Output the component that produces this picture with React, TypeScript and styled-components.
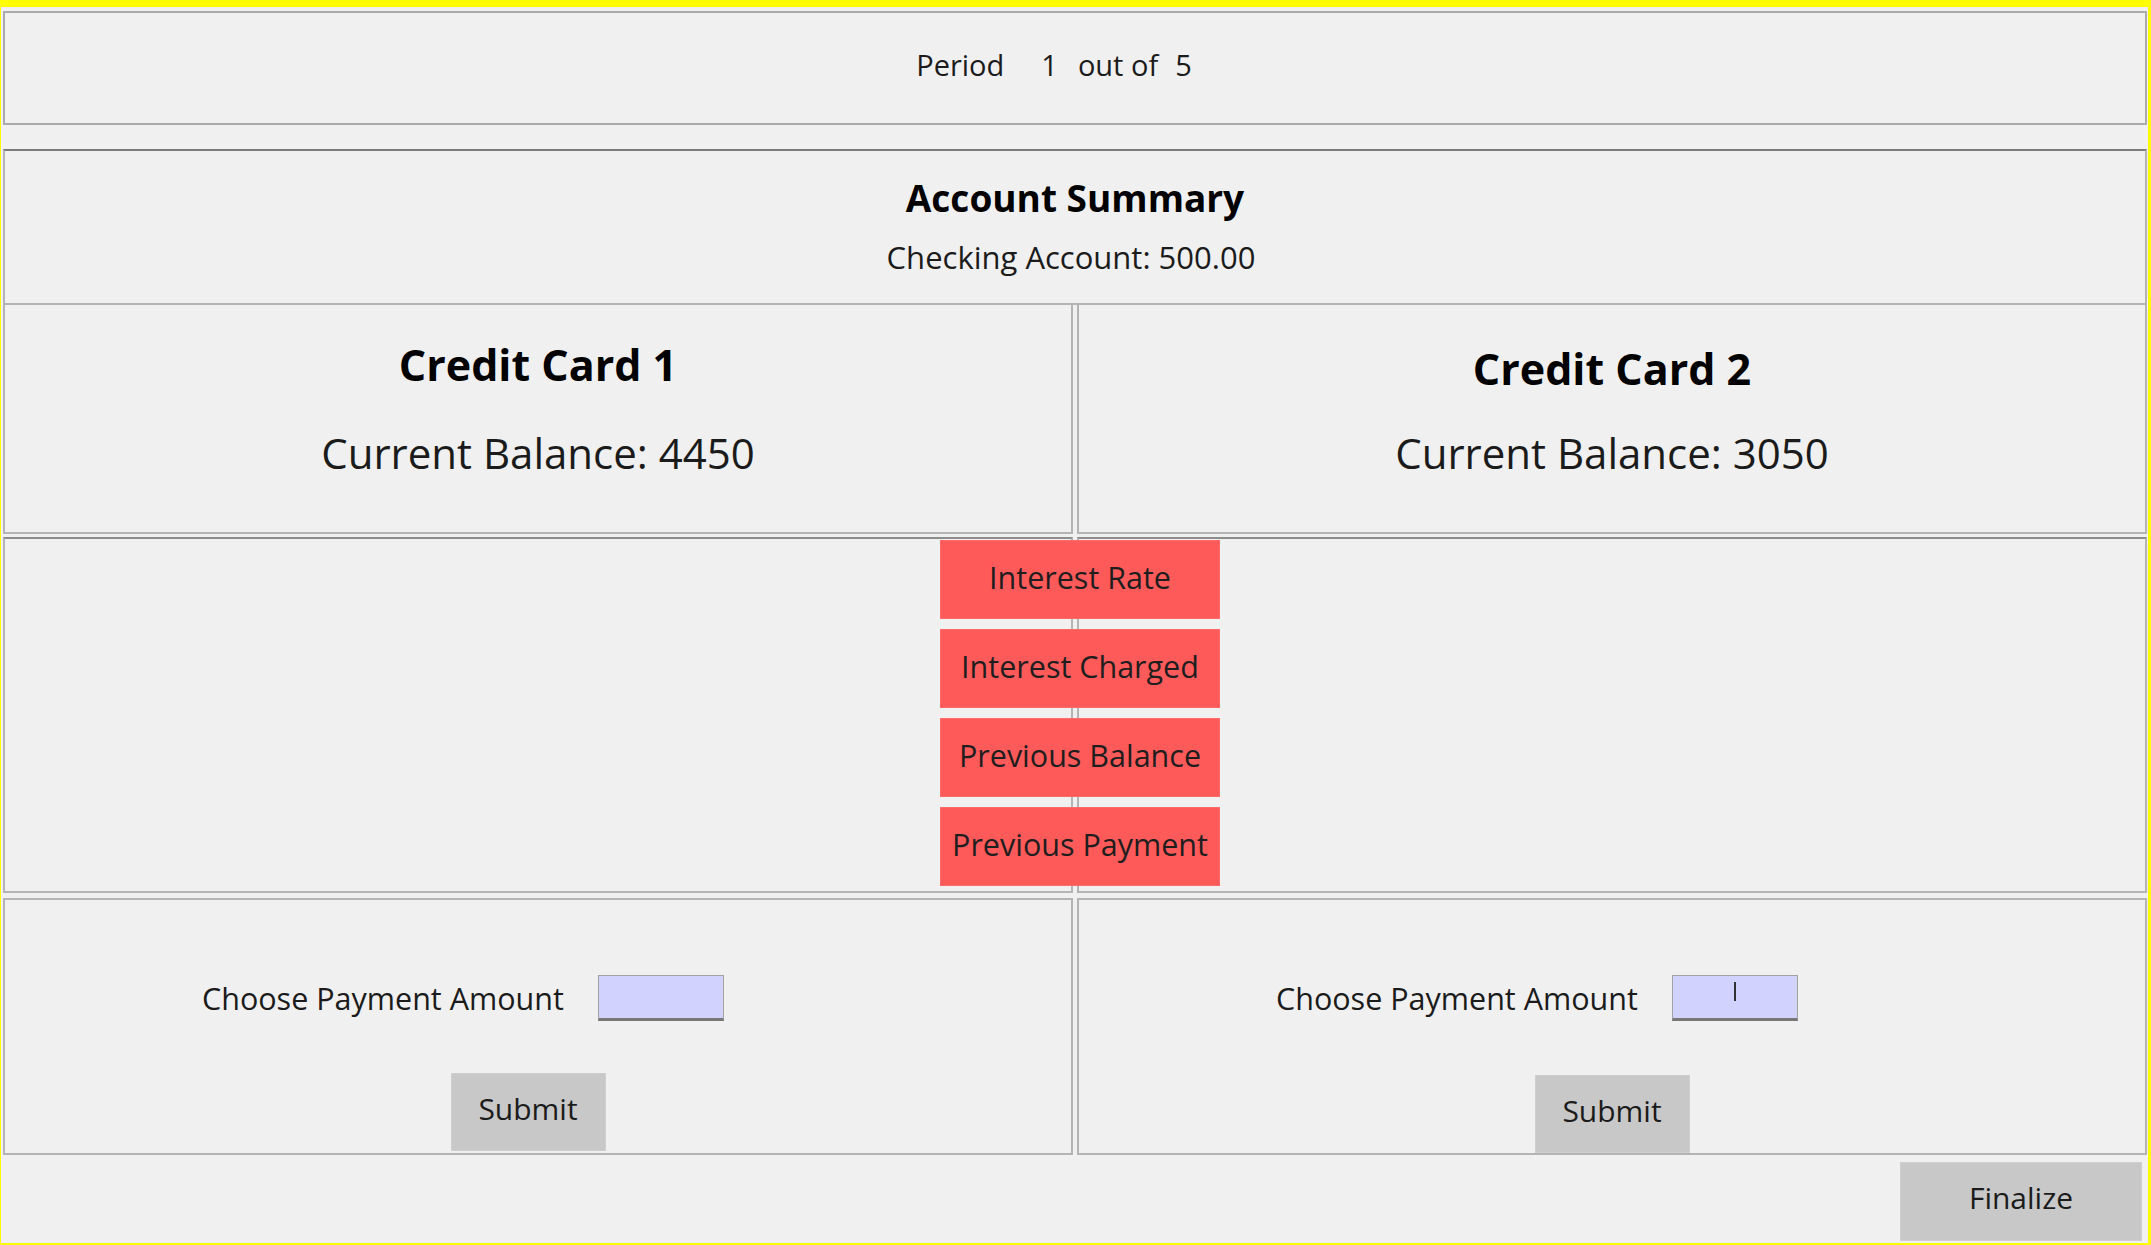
import styled, { createGlobalStyle } from "styled-components";

const GlobalStyle = createGlobalStyle`
  html, body {
    margin: 0;
    padding: 0;
    background: #ffff00;
  }
  body {
    font-family: "Open Sans", "Noto Sans", "Liberation Sans", sans-serif;
    color: #1b1b1b;
  }
  * { box-sizing: border-box; }
`;

const Window = styled.div`
  margin: 7px 3px 0 1px;
  height: 1236px;
  background: #f0f0f0;
  padding: 4px 1px 0 2px;
  display: flex;
  flex-direction: column;
`;

const PeriodBar = styled.div`
  height: 114px;
  border: 2px solid #ababab;
  display: flex;
  align-items: center;
  justify-content: center;
  padding: 0 42px 8px 0;
  font-size: 29px;
`;

const PeriodPart = styled.span<{ $gap?: number }>`
  margin-left: ${(p) => p.$gap ?? 0}px;
  white-space: pre;
`;

const Board = styled.div`
  margin-top: 24px;
  display: flex;
  flex-direction: column;
`;

const Summary = styled.div`
  height: 156px;
  border: 2px solid #b4b4b4;
  border-top-color: #7c7c7c;
  display: flex;
  flex-direction: column;
  align-items: center;
  padding-top: 25px;
`;

const SummaryTitle = styled.div`
  font-size: 37px;
  font-weight: 700;
  line-height: 44px;
  color: #000;
`;

const SummaryLine = styled.div`
  margin: 17px 8px 0 0;
  font-size: 31px;
  line-height: 40px;
`;

const Columns = styled.div`
  position: relative;
  display: grid;
  grid-template-columns: 1fr 1fr;
  column-gap: 4px;
`;

const Column = styled.div`
  display: flex;
  flex-direction: column;
`;

const CardBox = styled.div<{ $drop?: number }>`
  height: 229px;
  border: 2px solid #b4b4b4;
  border-top: none;
  display: flex;
  flex-direction: column;
  align-items: center;
  padding-top: ${(p) => 32 + (p.$drop ?? 0)}px;
`;

const CardTitle = styled.div`
  font-size: 43px;
  font-weight: 700;
  line-height: 56px;
  color: #000;
`;

const Balance = styled.div<{ $lift?: number }>`
  margin-top: ${(p) => 32 - (p.$lift ?? 0)}px;
  font-size: 42px;
  line-height: 56px;
`;

const DetailBox = styled.div`
  margin-top: 3px;
  height: 356px;
  border: 2px solid #b4b4b4;
  border-top-color: #8c8c8c;
`;

const PaymentBox = styled.div<{ $nudge?: number }>`
  margin-top: 5px;
  height: 257px;
  border: 2px solid #b4b4b4;
  display: flex;
  flex-direction: column;
  align-items: center;
  padding: 75px ${(p) => p.$nudge ?? 0}px 0 0;
`;

const PaymentRow = styled.div`
  align-self: flex-start;
  margin-left: 197px;
  height: 46px;
  display: flex;
  align-items: center;
  gap: 34px;
`;

const PaymentLabel = styled.span`
  font-size: 30.5px;
  line-height: 40px;
`;

const AmountField = styled.div`
  width: 126px;
  height: 46px;
  background: #d2d2ff;
  border: 1px solid #a2a2a2;
  border-bottom: 3px solid #777;
  display: flex;
  justify-content: center;
  padding-top: 6px;
`;

const Caret = styled.span`
  width: 2px;
  height: 19px;
  background: #333;
`;

const GreyButton = styled.button<{ $w: number; $h: number }>`
  width: ${(p) => p.$w}px;
  height: ${(p) => p.$h}px;
  background: #c8c8c8;
  border: 1px solid #cfcfcf;
  font-family: inherit;
  font-size: 30px;
  color: #1b1b1b;
  padding: 0 0 8px;
`;

const SubmitButton = styled(GreyButton)<{ $drop?: number }>`
  margin-top: ${(p) => 52 + (p.$drop ?? 0)}px;
`;

const InfoStack = styled.div`
  position: absolute;
  top: 235px;
  left: 937px;
  width: 280px;
  display: flex;
  flex-direction: column;
  gap: 10px;
`;

const InfoButton = styled.button`
  height: 79px;
  background: #ff5a5a;
  border: 1px solid #ff6b6b;
  font-family: inherit;
  font-size: 30.5px;
  color: #1e1e1e;
  padding: 0 0 6px;
`;

const Footer = styled.div`
  margin-top: 7px;
  display: flex;
  justify-content: flex-end;
  padding-right: 5px;
`;

type Card = { name: string; balance: number; drop: number; nudge: number; focused: boolean };

const cards: Card[] = [
  { name: "Credit Card 1", balance: 4450, drop: 0, nudge: 20, focused: false },
  { name: "Credit Card 2", balance: 3050, drop: 4, nudge: 0, focused: true },
];

const infoItems = ["Interest Rate", "Interest Charged", "Previous Balance", "Previous Payment"];

export default function App(): JSX.Element {
  return (
    <>
      <GlobalStyle />
      <Window>
        <PeriodBar>
          <PeriodPart>Period</PeriodPart>
          <PeriodPart $gap={37}>1</PeriodPart>
          <PeriodPart $gap={20}>out of</PeriodPart>
          <PeriodPart $gap={17}>5</PeriodPart>
        </PeriodBar>

        <Board>
          <Summary>
            <SummaryTitle>Account Summary</SummaryTitle>
            <SummaryLine>Checking Account: 500.00</SummaryLine>
          </Summary>

          <Columns>
            {cards.map((card) => (
              <Column key={card.name}>
                <CardBox $drop={card.drop}>
                  <CardTitle>{card.name}</CardTitle>
                  <Balance $lift={card.drop}>Current Balance: {card.balance}</Balance>
                </CardBox>
                <DetailBox />
                <PaymentBox $nudge={card.nudge}>
                  <PaymentRow>
                    <PaymentLabel>Choose Payment Amount</PaymentLabel>
                    <AmountField>{card.focused && <Caret />}</AmountField>
                  </PaymentRow>
                  <SubmitButton $w={155} $h={78} $drop={card.focused ? 2 : 0}>
                    Submit
                  </SubmitButton>
                </PaymentBox>
              </Column>
            ))}

            <InfoStack>
              {infoItems.map((item) => (
                <InfoButton key={item}>{item}</InfoButton>
              ))}
            </InfoStack>
          </Columns>
        </Board>

        <Footer>
          <GreyButton $w={242} $h={79}>Finalize</GreyButton>
        </Footer>
      </Window>
    </>
  );
}
